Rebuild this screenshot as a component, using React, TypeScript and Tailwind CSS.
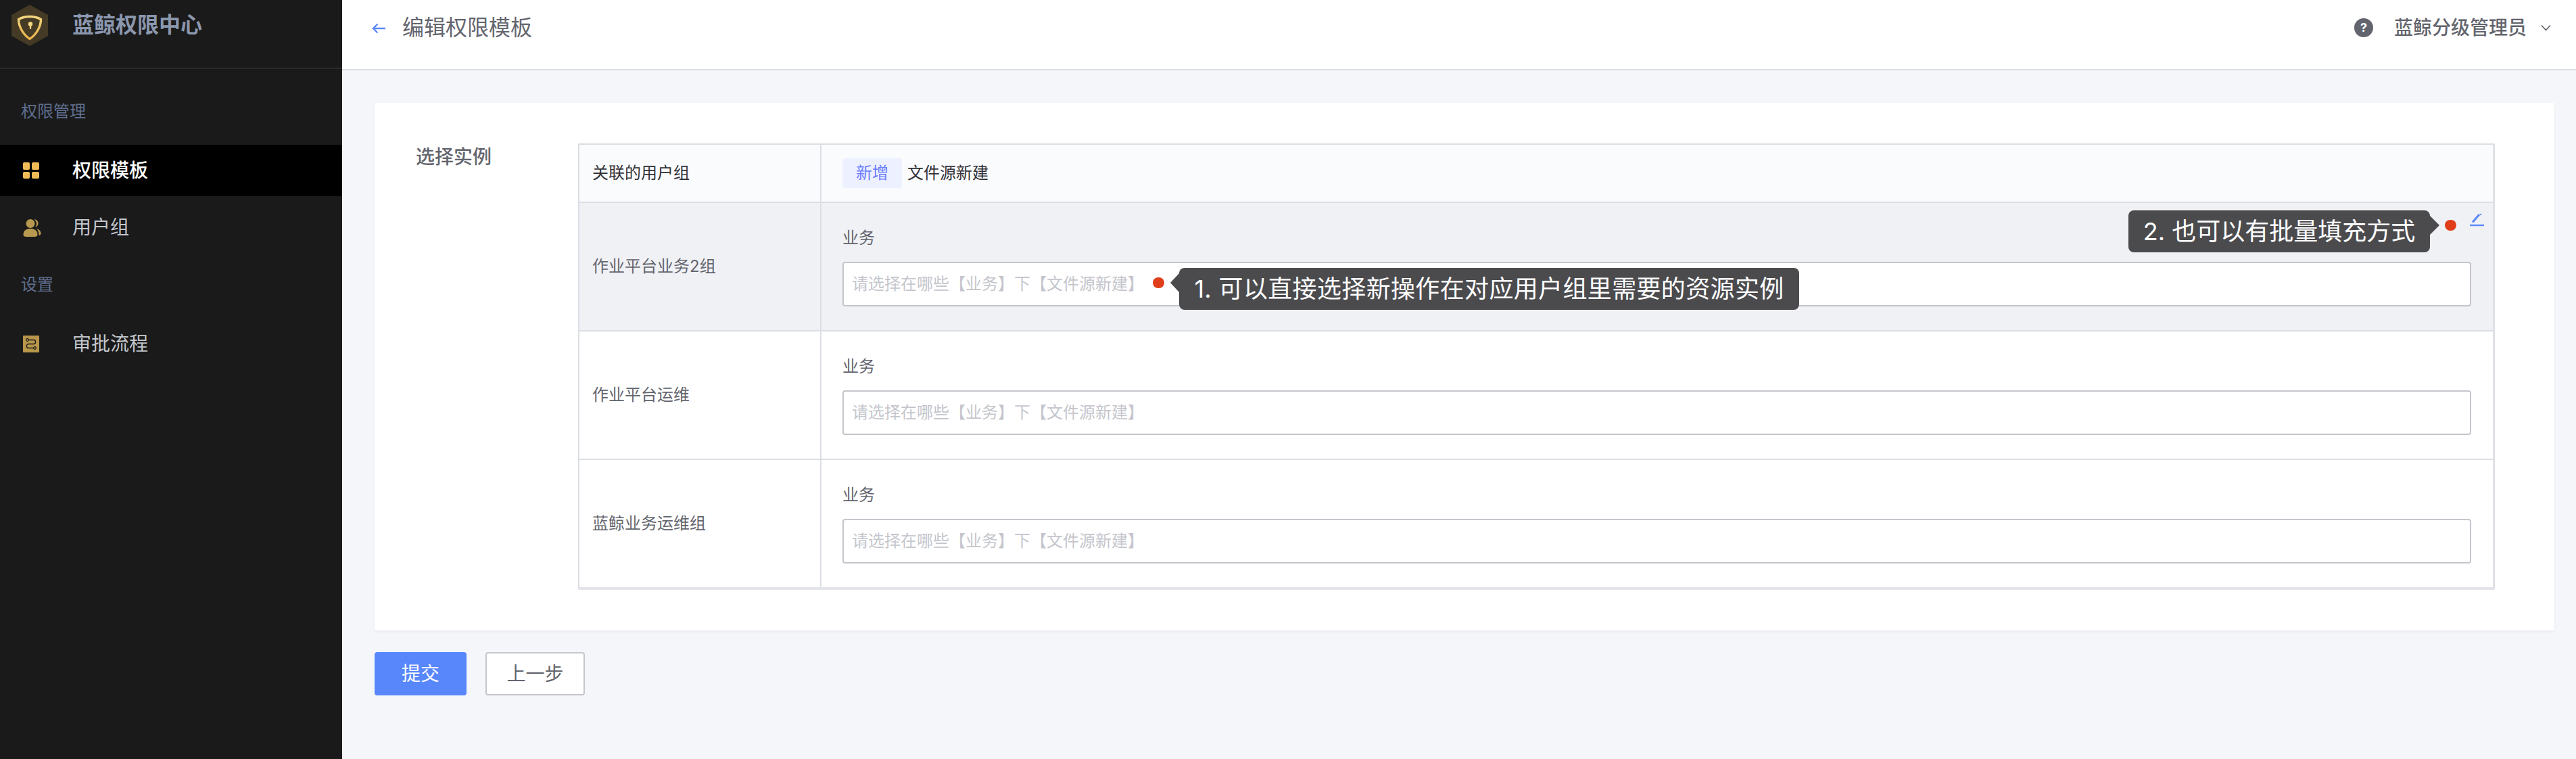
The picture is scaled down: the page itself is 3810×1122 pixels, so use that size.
const FONT = "font-['Inter','Noto_Sans_CJK_SC',sans-serif]";

const GROUPS = ['作业平台业务2组', '作业平台运维', '蓝鲸业务运维组'];

function Logo() {
  return (
    <svg width="54" height="61" viewBox="0 0 54 61" className="shrink-0">
      <defs>
        <linearGradient id="shield" x1="0" y1="0" x2="0" y2="1">
          <stop offset="0" stopColor="#f3d67f" />
          <stop offset="1" stopColor="#e6b24a" />
        </linearGradient>
      </defs>
      <path d="M27 1 L53 15.5 V45.5 L27 60 L1 45.5 V15.5 Z" fill="#443a25" stroke="#443a25" strokeLinejoin="round" strokeWidth="2" />
      <path d="M27 17.5 C33 17.5 39 19 43.5 21.5 C43.5 32 37 44 27 50.5 C17 44 10.5 32 10.5 21.5 C15 19 21 17.5 27 17.5 Z" fill="none" stroke="url(#shield)" strokeWidth="3.4" strokeLinejoin="round" />
      <circle cx="28" cy="28.5" r="3.2" fill="#f3d67f" />
      <rect x="26.8" y="29" width="2.4" height="7" rx="1" fill="#f3d67f" />
    </svg>
  );
}

function TemplateIcon() {
  return (
    <svg width="24" height="24" viewBox="0 0 24 24" fill="#f0bb57">
      <rect x="0" y="0" width="10" height="11" rx="2" />
      <rect x="13" y="0" width="11" height="11" rx="2" />
      <rect x="0" y="14" width="10" height="10" rx="2" />
      <rect x="13" y="14" width="11" height="10" rx="2" />
    </svg>
  );
}

function UsersIcon() {
  return (
    <svg width="27" height="27" viewBox="0 0 26 27" fill="#b8994f">
      <circle cx="10.5" cy="7.5" r="6.5" />
      <path d="M0 24 C0 17.5 5 15 10.5 15 C16 15 21 17.5 21 24 C21 26 19 27 17 27 H4 C2 27 0 26 0 24 Z" />
      <path d="M16 1.5 C19.5 1 22 4 22 7 C22 10 20 12.5 17.5 13 C19 11.5 19.5 9.5 19.5 7.2 C19.5 5 18 3 16 1.5 Z" />
      <path d="M19.5 15 C23 16 26 18.5 26 22 C26 24 24.5 25 23 25 C23 21 22 17.5 19.5 15 Z" />
    </svg>
  );
}

function FlowIcon() {
  return (
    <svg width="24" height="25" viewBox="0 0 24 25">
      <rect width="24" height="25" rx="1" fill="#b8964a" />
      <path d="M8 6.5 H16 C19.5 6.5 19.5 12.5 16 12.5 H8 C4.5 12.5 4.5 18.5 8 18.5 H16" fill="none" stroke="#1a1a1a" strokeWidth="1.3" />
      <circle cx="6.5" cy="6.5" r="1.8" fill="#b8964a" stroke="#1a1a1a" strokeWidth="1.2" />
      <circle cx="17.5" cy="18.5" r="1.8" fill="#b8964a" stroke="#1a1a1a" strokeWidth="1.2" />
    </svg>
  );
}

function NavItem({ icon, label, active, className }: { icon: React.ReactNode; label: string; active?: boolean; className: string }) {
  return (
    <div className={`flex items-center h-[76px] pl-[34px] ${active ? 'bg-black text-white font-medium' : 'text-[#c4c6cc]'} ${className}`}>
      <span className="flex w-[73px] shrink-0">{icon}</span>
      <span className="text-[28px] leading-[36px]">{label}</span>
    </div>
  );
}

function Sidebar() {
  return (
    <aside className="w-[506px] shrink-0 bg-[#1a1a1a]">
      <div className="flex items-center h-[102px] pl-[17px] pb-[26px] border-b-2 border-[#2a2a2c]">
        <Logo />
        <span className="ml-[36px] text-[32px] leading-[40px] font-bold text-[#8b97ae]">蓝鲸权限中心</span>
      </div>
      <div className="mt-[47px] pl-[31px] text-[24px] leading-[32px] text-[#5f6e8f]">权限管理</div>
      <NavItem className="mt-[33px]" icon={<TemplateIcon />} label="权限模板" active />
      <NavItem className="mt-[8px]" icon={<UsersIcon />} label="用户组" />
      <div className="mt-[31px] pl-[31px] text-[24px] leading-[32px] text-[#5f6e8f]">设置</div>
      <NavItem className="mt-[33px]" icon={<FlowIcon />} label="审批流程" />
    </aside>
  );
}

function Header() {
  return (
    <header className="flex items-center h-[104px] shrink-0 bg-white border-b-2 border-[#dcdee5] pl-[44px] pr-[37px] pb-[20px]">
      <svg width="20" height="16" viewBox="0 0 20 16" fill="none" stroke="#5a89fa" strokeWidth="2.4" className="mt-[2px]">
        <path d="M20 8 H2 M8.5 1.5 L2 8 L8.5 14.5" />
      </svg>
      <h1 className="ml-[25px] text-[32px] leading-[40px] font-normal text-[#63656e]">编辑权限模板</h1>
      <div className="flex items-center ml-auto">
        <span className="flex items-center justify-center w-[28px] h-[28px] rounded-full bg-[#63656e] text-white text-[18px] font-bold leading-none">?</span>
        <span className="ml-[31px] text-[28px] leading-[36px] font-medium text-[#63656e]">蓝鲸分级管理员</span>
        <svg width="15" height="10" viewBox="0 0 15 10" fill="none" stroke="#63656e" strokeWidth="1.6" className="ml-[21px]">
          <path d="M1 1.5 L7.5 8.5 L14 1.5" />
        </svg>
      </div>
    </header>
  );
}

function Tip({ text, className, arrow }: { text: string; className: string; arrow: string }) {
  return (
    <div className={`absolute z-10 flex items-center justify-center h-[62px] rounded-[8px] bg-[#4b4b4e] text-white text-[36px] leading-[62px] whitespace-nowrap ${className}`}>
      <span className={`absolute w-0 h-0 border-y-[14px] border-y-transparent ${arrow}`} />
      {text}
    </div>
  );
}

function Dot({ className }: { className: string }) {
  return <span className={`absolute z-10 w-[17px] h-[16px] rounded-full bg-[#e03e1a] ${className}`} />;
}

function InstanceRow({ name, index }: { name: string; index: number }) {
  const hovered = index === 0;
  return (
    <div className={`flex h-[190px] border-t-2 border-[#dcdee5] ${hovered ? 'bg-[#f0f1f5]' : 'bg-white'}`}>
      <div className="flex items-center w-[358px] shrink-0 pl-[19px] border-r-2 border-[#dcdee5] text-[24px] leading-[32px] text-[#63656e]">{name}</div>
      <div className="relative flex-1 pt-[36px] pl-[31px] pr-[32px]">
        <div className="mb-[19px] text-[24px] leading-[32px] text-[#63656e]">业务</div>
        <div className="relative flex items-center h-[66px] rounded-[4px] border-2 border-[#c4c6cc] bg-white pl-[12px] text-[24px] text-[#c4c6cc]">
          请选择在哪些【业务】下【文件源新建】
          {hovered && (
            <>
              <Dot className="left-[457px] top-[21px]" />
              <Tip
                text="1. 可以直接选择新操作在对应用户组里需要的资源实例"
                className="left-[496px] top-[7px] w-[917px] tracking-[0.35px]"
                arrow="right-full top-[8px] border-r-[13px] border-r-[#4b4b4e]"
              />
            </>
          )}
        </div>
        {hovered && (
          <>
            <Tip
              text="2. 也可以有批量填充方式"
              className="left-[1933px] top-[11px] w-[446px]"
              arrow="left-full top-[8px] border-l-[14px] border-l-[#4b4b4e]"
            />
            <Dot className="left-[2401px] top-[25px]" />
            <svg width="21" height="20" viewBox="0 0 21 20" fill="none" stroke="#5a89fa" className="absolute left-[2438px] top-[15px]">
              <path d="M4 13.5 L14 2" strokeWidth="3" />
              <path d="M15.5 3 L17 1" strokeWidth="2" />
              <path d="M0 18 H21" strokeWidth="2.4" />
            </svg>
          </>
        )}
      </div>
    </div>
  );
}

function InstanceTable() {
  return (
    <div className="w-[2835px] rounded-[2px] border-x-2 border-t-2 border-b-4 border-r-[3px] border-[#dcdee5] border-b-[#e4e5ea] border-r-[#e0e1e6]">
      <div className="flex h-[84px] bg-[#fafbfd]">
        <div className="flex items-center w-[358px] shrink-0 pl-[19px] border-r-2 border-[#dcdee5] text-[24px] leading-[32px] text-[#313238]">关联的用户组</div>
        <div className="flex items-center pl-[31px] text-[24px] leading-[32px]">
          <span className="flex items-center justify-center w-[88px] h-[44px] rounded-[4px] bg-[#edf0ff] text-[#6a7dff]">新增</span>
          <span className="ml-[8px] text-[#313238]">文件源新建</span>
        </div>
      </div>
      {GROUPS.map((name, i) => (
        <InstanceRow key={name} name={name} index={i} />
      ))}
    </div>
  );
}

export default function App() {
  return (
    <div className={`flex w-[3810px] h-[1122px] overflow-hidden ${FONT}`}>
      <Sidebar />
      <main className="flex flex-col flex-1 min-w-0 bg-[#f5f6fa]">
        <Header />
        <div className="pt-[48px] pl-[48px] pr-[32px]">
          <section className="flex bg-white pt-[60px] pb-[60px] shadow-[0_2px_4px_rgba(25,25,41,0.06)]">
            <div className="w-[301px] shrink-0 pl-[61px] text-[28px] leading-[40px] font-medium text-[#63656e]">选择实例</div>
            <InstanceTable />
          </section>
          <div className="flex gap-[28px] mt-[32px]">
            <button className="w-[136px] h-[64px] rounded-[4px] bg-[#5886fb] text-white text-[28px]">提交</button>
            <button className="w-[147px] h-[64px] rounded-[4px] border-2 border-[#c4c6cc] bg-white text-[#63656e] text-[28px]">上一步</button>
          </div>
        </div>
      </main>
    </div>
  );
}
